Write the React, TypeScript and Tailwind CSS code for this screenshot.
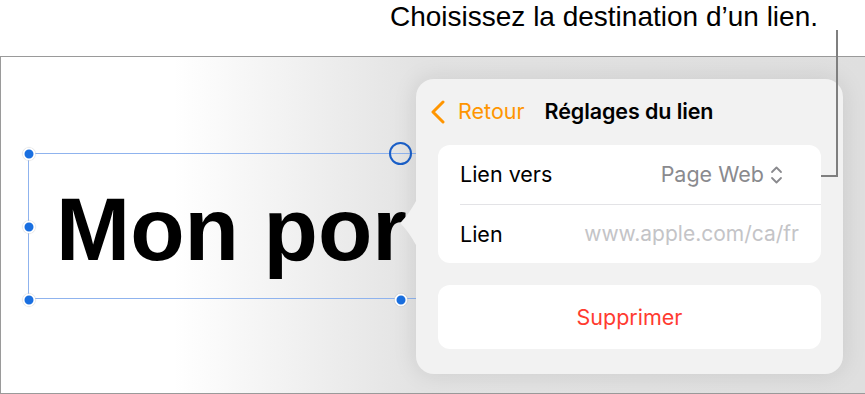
import React from "react";

export default function App() {
  return (
    <div className="relative w-[865px] h-[394px] bg-white overflow-hidden font-['Inter',sans-serif]">
      {/* caption */}
      <div className="h-[56px] flex justify-end pr-[47px] pt-[1px]">
        <span className="font-['Liberation_Sans',Arial,sans-serif] text-[28px] leading-[32px] text-black">
          Choisissez la destination d’un lien.
        </span>
      </div>

      {/* frame */}
      <div className="relative h-[338px] border-t border-l border-b border-[#9a9a9a] bg-[linear-gradient(90deg,#ffffff_0%,#ffffff_20%,#e3e3e3_48%,#dfdfdf_100%)]">
        {/* visible part of the slide title */}
        <div className="absolute left-[55px] top-[127px] font-['Liberation_Sans',Arial,sans-serif] font-bold text-[89px] leading-[90px] text-black whitespace-nowrap">
          Mon por
        </div>

        {/* selection box */}
        <div className="absolute left-[27px] top-[96px] w-[392px] h-[146px] border-t border-b border-l border-[#8fb3ee]" />
        {[
          [27, 96],
          [27, 169],
          [27, 242],
          [399, 242],
        ].map(([x, y], i) => (
          <div
            key={i}
            className="absolute w-[13px] h-[13px] rounded-full bg-[#1a6fe0] border-2 border-white shadow-[0_0_1px_rgba(0,0,0,0.3)] -translate-x-1/2 -translate-y-1/2"
            style={{ left: x + 0.5, top: y + 0.5 }}
          />
        ))}
        <div className="absolute left-[388px] top-[85px] w-[23px] h-[23px] rounded-full border-2 border-[#1a5fc8] bg-transparent" />

        {/* popover */}
        <div className="absolute left-[415px] top-[22px] w-[427px] h-[295px] rounded-[18px] bg-[#f2f2f2] shadow-[0_0_24px_rgba(0,0,0,0.10)] flex flex-col px-[22px]">
          {/* arrow */}
          <svg className="absolute left-[-16px] top-[120px]" width="17" height="48" viewBox="0 0 17 48">
            <path d="M17 0 C14 6 8 16 2 22 C0 24 0 24 2 26 C8 32 14 42 17 48 Z" fill="#f2f2f2" />
          </svg>
          {/* header */}
          <div className="h-[66px] flex items-center relative pb-[2px]">
            <svg className="absolute left-[-8px] top-[21px]" width="16" height="24" viewBox="0 0 16 24">
              <path d="M13 2 L3 12 L13 22" fill="none" stroke="#ff9500" strokeWidth="3" strokeLinecap="round" strokeLinejoin="round" />
            </svg>
            <span className="ml-[20px] text-[21.5px] text-[#ff9500]">Retour</span>
            <span className="ml-[20px] text-[21.5px] font-semibold text-black tracking-[-0.1px]">Réglages du lien</span>
          </div>

          {/* card 1 */}
          <div className="bg-white rounded-[12px] flex flex-col">
            <div className="h-[59px] flex items-center pl-[22px] pr-[38px]">
              <span className="text-[21.5px] text-black">Lien vers</span>
              <span className="ml-auto text-[21.5px] text-[#8a8a8e]">Page Web</span>
              <svg className="ml-[6px]" width="13" height="20" viewBox="0 0 13 20">
                <path d="M2 7 L6.5 2.5 L11 7 M2 13 L6.5 17.5 L11 13" fill="none" stroke="#8a8a8e" strokeWidth="1.8" strokeLinecap="round" strokeLinejoin="round" />
              </svg>
            </div>
            <div className="ml-[22px] h-px bg-[#e3e3e6]" />
            <div className="h-[58px] flex items-center pl-[22px] pr-[22px]">
              <span className="text-[21.5px] text-black">Lien</span>
              <span className="ml-auto text-[21px] text-[#c4c4c7]">www.apple.com/ca/fr</span>
            </div>
          </div>

          {/* card 2 */}
          <div className="mt-[22px] h-[64px] bg-white rounded-[12px] flex items-center justify-center">
            <span className="text-[21.5px] text-[#ff3b30]">Supprimer</span>
          </div>
        </div>
      </div>

      {/* leader line */}
      <svg className="absolute left-0 top-0 pointer-events-none" width="865" height="394">
        <path d="M837 30 L837 176 L821 176" fill="none" stroke="#7f7f7f" strokeWidth="2" />
      </svg>
    </div>
  );
}
